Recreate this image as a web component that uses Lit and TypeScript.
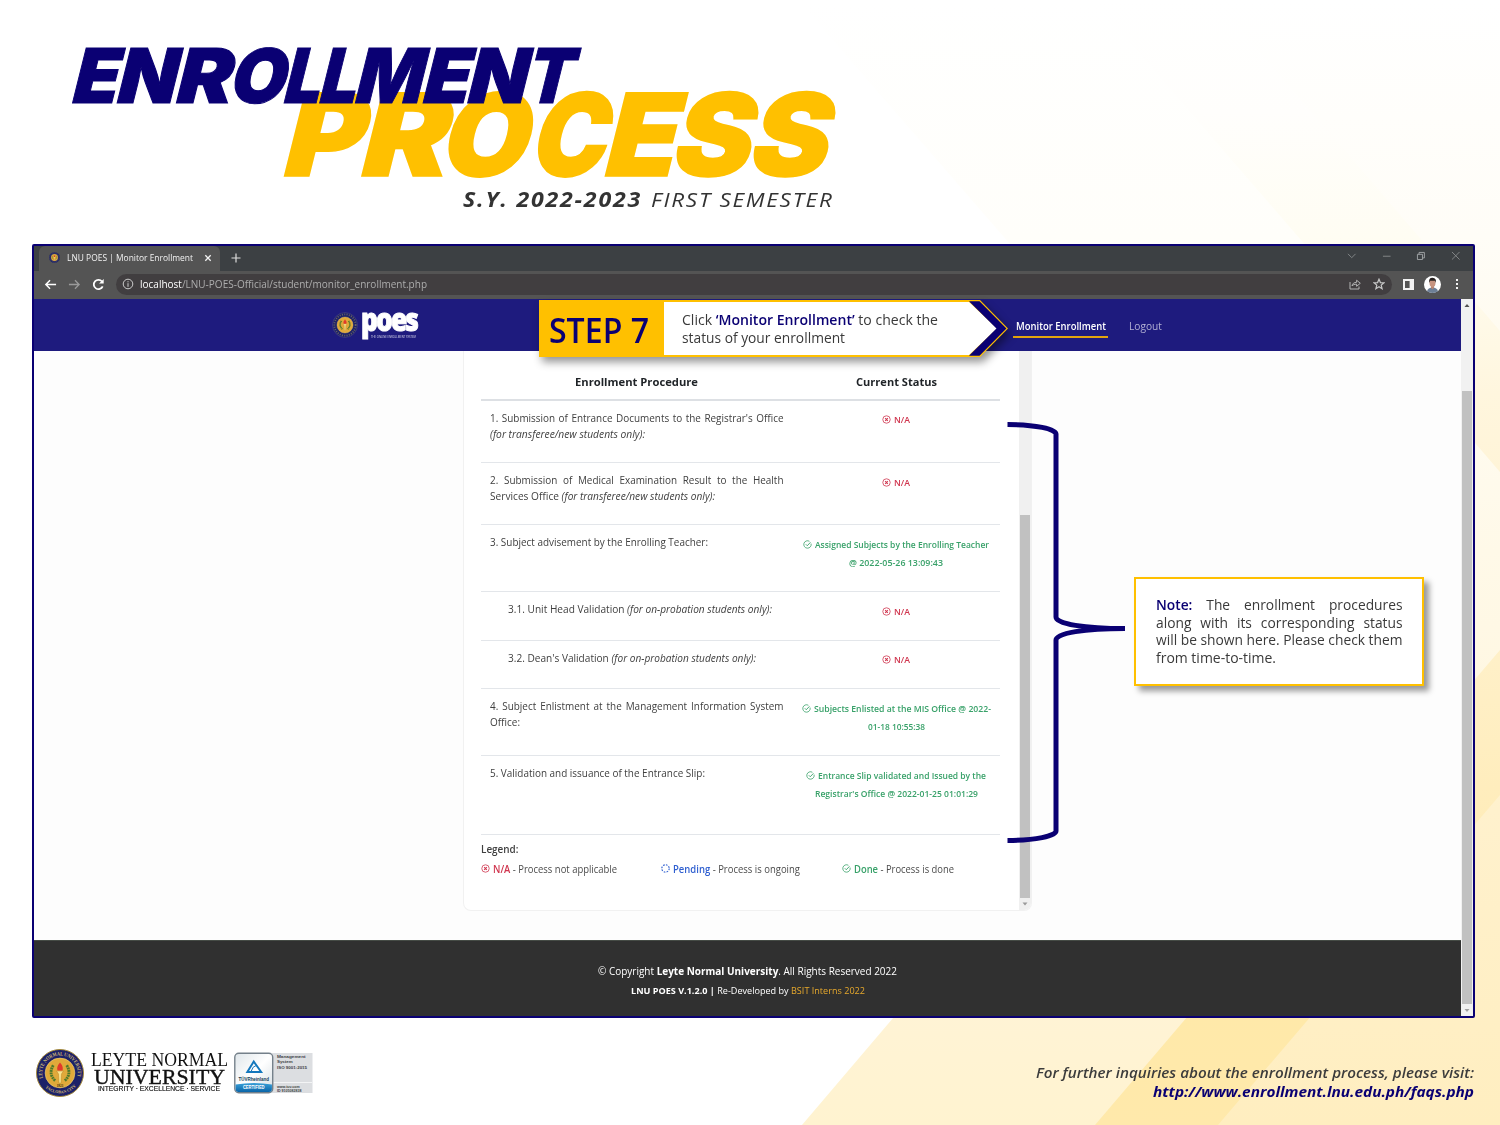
import { LitElement, html, svg, css } from "lit";
import { customElement, property } from "lit/decorators.js";

/** One line of text condensed or expanded to a given width. */
@customElement("fit-text")
class FitText extends LitElement {
  @property({ type: Number }) w = 0;
  /** Stretch the gaps between words instead of the glyphs. */
  @property({ type: Boolean }) justify = false;

  static styles = css`
    :host { display: inline-block; white-space: nowrap; vertical-align: top; text-align: left; }
    .in { display: inline-block; transform-origin: 0 50%; }
  `;

  firstUpdated() {
    const inner = this.renderRoot.querySelector(".in") as HTMLElement;
    const natural = inner.getBoundingClientRect().width;
    this.style.width = this.w + "px";
    if (!natural) return;
    const gaps = ((this.textContent || "").trim().match(/\s+/g) || []).length;
    if (this.justify && gaps) {
      const squeeze = 0.945;
      inner.style.wordSpacing = (this.w / squeeze - natural) / gaps + "px";
      inner.style.transform = `scaleX(${squeeze})`;
    } else {
      inner.style.transform = `scaleX(${this.w / natural})`;
    }
  }

  render() {
    return html`<span class="in"><slot></slot></span>`;
  }
}

const iconNa = html`<svg class="ic" viewBox="0 0 16 16" fill="none" stroke="currentColor" stroke-width="1.4"><circle cx="8" cy="8" r="6.6"/><path d="M5.6 5.6l4.8 4.8M10.4 5.6l-4.8 4.8" stroke-width="1.9"/></svg>`;
const iconOk = html`<svg class="ic" viewBox="0 0 16 16" fill="none" stroke="currentColor" stroke-width="1.4"><path d="M14.4 6.4A6.6 6.6 0 1 1 11.4 2.3"/><path d="M5 7.6l2.6 2.6 5.6-6" stroke-width="1.6"/></svg>`;
const iconPending = html`<svg class="ic" viewBox="0 0 16 16" fill="none" stroke="currentColor" stroke-width="2"><circle cx="8" cy="8" r="6.6" stroke-dasharray="3 2.18"/></svg>`;

const sealCore = svg`
  <circle cx="50" cy="50" r="31" fill="#e0a93a" stroke="#efd27a" stroke-width="1.2"/>
  <path d="M36 34Q25 52 40 66M64 34Q75 52 60 66" fill="none" stroke="#4f7a2b" stroke-width="6" stroke-dasharray="4 1.2"/>
  <path d="M43 46H57L53 52 52 71H48L47 52Z" fill="#f9e48f" stroke="#a9731b" stroke-width=".8"/>
  <path d="M45 45Q42 37 50 28Q58 37 55 45Z" fill="#e2382b"/>`;

const seal = html`
  <svg class="seal" viewBox="0 0 100 100">
    <defs>
      <path id="arcTop" d="M14.5 61A37 37 0 1 1 85.5 61"/>
      <path id="arcBottom" d="M10 66A43.5 43.5 0 0 0 90 66"/>
    </defs>
    <circle cx="50" cy="50" r="49" fill="#1c2168" stroke="#a68b3c" stroke-width="2"/>
    <text font-family="Liberation Serif" font-weight="700" font-size="11" fill="#d3ba74"><textPath href="#arcTop" textLength="134" lengthAdjust="spacingAndGlyphs">LEYTE NORMAL UNIVERSITY</textPath></text>
    <text font-family="Liberation Serif" font-weight="700" font-size="8.5" fill="#d3ba74"><textPath href="#arcBottom" startOffset="17">TACLOBAN CITY</textPath></text>
    ${sealCore}
    <text x="50" y="78.5" font-family="Liberation Serif" font-weight="700" font-size="7" text-anchor="middle" fill="#3c2d10">1921</text>
  </svg>`;

const sealSmall = (edge: string) => html`
  <svg class="seal" viewBox="0 0 100 100">
    <circle cx="50" cy="50" r="48" fill="#1c2168" stroke=${edge} stroke-width="2"/>
    <circle cx="50" cy="50" r="41" fill="none" stroke="#a89664" stroke-width="7" stroke-dasharray="4 5" opacity=".55"/>
    ${sealCore}
  </svg>`;

interface Row {
  cls: string;
  lines: unknown[];
  status: unknown;
}

const na = html`<div class="st na">${iconNa}<fit-text w="16">N/A</fit-text></div>`;

const rows: Row[] = [
  {
    cls: "r62",
    lines: [
      html`<fit-text w="293.5" justify>1. Submission of Entrance Documents to the Registrar's Office</fit-text>`,
      html`<fit-text w="155"><i>(for transferee/new students only):</i></fit-text>`,
    ],
    status: na,
  },
  {
    cls: "r62",
    lines: [
      html`<fit-text w="293.5" justify>2. Submission of Medical Examination Result to the Health</fit-text>`,
      html`<fit-text w="225">Services Office <i>(for transferee/new students only):</i></fit-text>`,
    ],
    status: na,
  },
  {
    cls: "r66",
    lines: [html`<fit-text w="218">3. Subject advisement by the Enrolling Teacher:</fit-text>`],
    status: html`<div class="st ok">${iconOk}<fit-text w="174">Assigned Subjects by the Enrolling Teacher</fit-text></div>
      <div class="st ok"><fit-text w="94">@ 2022-05-26 13:09:43</fit-text></div>`,
  },
  {
    cls: "r49 sub",
    lines: [html`<fit-text w="264">3.1. Unit Head Validation <i>(for on-probation students only):</i></fit-text>`],
    status: na,
  },
  {
    cls: "r49 sub",
    lines: [html`<fit-text w="248">3.2. Dean's Validation <i>(for on-probation students only):</i></fit-text>`],
    status: na,
  },
  {
    cls: "r66",
    lines: [
      html`<fit-text w="293.5" justify>4. Subject Enlistment at the Management Information System</fit-text>`,
      html`<fit-text w="30">Office:</fit-text>`,
    ],
    status: html`<div class="st ok">${iconOk}<fit-text w="177">Subjects Enlisted at the MIS Office @ 2022-</fit-text></div>
      <div class="st ok"><fit-text w="57">01-18 10:55:38</fit-text></div>`,
  },
  {
    cls: "r79",
    lines: [html`<fit-text w="215">5. Validation and issuance of the Entrance Slip:</fit-text>`],
    status: html`<div class="st ok">${iconOk}<fit-text w="168">Entrance Slip validated and Issued by the</fit-text></div>
      <div class="st ok"><fit-text w="163">Registrar's Office @ 2022-01-25 01:01:29</fit-text></div>`,
  },
];

/** Letter, left edge, advance. */
type Glyph = [string, number, number];
const processGlyphs: Glyph[] = [
  ["P", 279, 80], ["R", 356, 87], ["O", 437, 87], ["C", 527, 75], ["E", 600, 72], ["S", 668, 79], ["S", 745, 79],
];
const enrollGlyphs: Glyph[] = [
  ["E", 69, 46], ["N", 113.5, 60], ["R", 172.5, 56], ["O", 227, 56], ["L", 281, 37], ["L", 316.5, 37.5], ["M", 352, 68], ["E", 419.5, 47], ["N", 464, 60], ["T", 523, 46.5],
];
const spans = (list: Glyph[]) =>
  list.map(([ch, x, len]) => svg`<tspan x=${x} textLength=${len} lengthAdjust="spacingAndGlyphs">${ch}</tspan>`);

@customElement("app-root")
class AppRoot extends LitElement {
  static styles = css`
    :host { display: block; }
    * { box-sizing: border-box; }
    .page { position: relative; width: 1500px; height: 1125px; overflow: hidden; background: #fff; display: flex; flex-direction: column; font-family: "Open Sans", "Noto Sans", sans-serif; color: #3a3a3a; }
    .bg { position: absolute; left: 0; top: 0; width: 1500px; height: 1125px; }
    .hero { position: relative; height: 243.5px; display: flex; flex-direction: column; }
    .title { display: block; height: 187px; width: 900px; overflow: visible; }
    .sy { display: flex; gap: 9px; padding-left: 463px; font-size: 20.8px; line-height: 24px; letter-spacing: 1.6px; font-style: italic; color: #333; }
    .sy b { font-weight: 700; }

    .window { position: relative; margin-left: 32px; width: 1443px; height: 774.5px; border: 2px solid #0a0073; border-radius: 2px; display: flex; flex-direction: column; background: #fdfdfd; }
    .tabs { height: 25.4px; background: #3c4043; display: flex; align-items: stretch; justify-content: space-between; padding-left: 5px; }
    .tabs-l { display: flex; align-items: center; }
    .tab { align-self: flex-end; height: 25px; width: 181px; background: #545454; border-radius: 6px 6px 0 0; display: flex; align-items: center; padding-left: 10px; padding-bottom: 1px; font-size: 9.8px; color: #f2f2f2; }
    .fav { width: 11px; height: 11px; display: flex; margin-right: 7px; }
    .seal { display: block; width: 100%; height: 100%; }
    .tab .x { width: 8px; height: 8px; margin-left: 11px; }
    .plus { width: 10px; height: 10px; margin-left: 11px; }
    .wc { display: flex; align-items: center; gap: 25px; padding: 0 13px 5px 0; }
    .wc svg { width: 9.5px; height: 9.5px; display: block; }
    .bar { height: 28px; background: #545454; display: flex; align-items: center; padding: 0 11px 1px 9.5px; }
    .bar svg { display: block; }
    .bar .nv { width: 13px; height: 13px; margin-right: 11px; }
    .url { flex: 1; height: 21px; border-radius: 11px; background: #413e40; display: flex; align-items: center; padding: 0 7px 0 6.5px; font-size: 10.6px; color: #adadad; }
    .url .info { width: 12px; height: 12px; margin-right: 6px; }
    .url .sp { flex: 1; }
    .url .ur { width: 12px; height: 12px; margin-left: 12px; }
    .hl { color: #fff; }
    .side { width: 11px; height: 11px; margin-left: 11px; }
    .ava { width: 17px; height: 17px; margin-left: 10px; }
    .dots { width: 4px; height: 12px; margin-left: 14px; margin-right: 3px; }

    .view { flex: 1; display: flex; min-height: 0; }
    .doc { width: 1427px; display: flex; flex-direction: column; }
    .nav { height: 52px; background: #1e1b7e; display: flex; align-items: center; justify-content: space-between; padding-left: 298px; padding-right: 299.5px; }
    .brand { display: flex; align-items: center; gap: 3px; }
    .brand .bs { width: 26px; height: 26px; }
    .poes { display: flex; flex-direction: column; color: #fff; height: 32px; }
    .poes .big { font-size: 32.5px; line-height: 26px; font-weight: 800; letter-spacing: -2.4px; height: 23px; margin-top: -3px; -webkit-text-stroke: 1px #fff; }
    .poes .tiny { font-size: 3.6px; line-height: 4px; margin: 6px 0 0 10px; color: #d9d9ec; }
    .links { display: flex; gap: 23px; font-size: 10.8px; font-weight: 600; color: #b3b1d4; line-height: 20px; padding-top: 4px; }
    .links .on { color: #fff; border-bottom: 2px solid #e3a40e; padding: 0 2.5px; margin-right: -2.5px; height: 21.5px; }
    .links .off { font-weight: 500; }

    .main { height: 589px; background: #fdfdfd; padding-left: 428.7px; }
    .card { width: 569.5px; height: 559.8px; background: #fff; border: 1.5px solid #f1f1f1; border-top: 0; border-radius: 0 0 8px 8px; display: flex; justify-content: space-between; overflow: hidden; }
    .body { width: 537px; padding: 0 0 0 17.5px; color: #404040; font-size: 10.5px; }
    .head { width: 519px; height: 49.8px; border-bottom: 2px solid #dde0e4; display: flex; align-items: center; font-weight: 700; font-size: 11.2px; color: #1f2327; padding-top: 13px; }
    .c1 { width: 311px; }
    .c2 { width: 208px; }
    .head .c1, .head .c2 { text-align: center; }
    .row { width: 519px; display: flex; border-bottom: 1px solid #e3e6ea; }
    .row .c1 { padding: 9.2px 0 0 9px; line-height: 16px; }
    .row .c2 { padding-top: 10.8px; }
    .row.sub .c1 { padding-left: 27px; }
    .r62 { height: 62.2px; }
    .r66 { height: 66.8px; }
    .r49 { height: 48.7px; }
    .r79 { height: 79px; }
    .c1 > div { height: 16px; }
    .st { height: 18px; line-height: 18px; font-size: 9.6px; font-weight: 600; display: flex; justify-content: center; }
    .ic { width: 9px; height: 9px; margin-right: 3px; margin-top: 4px; flex: none; }
    .na { color: #d0364f; }
    .ok { color: #38a169; }
    .pe { color: #2f5fd0; }
    .legend { padding-top: 5px; line-height: 18px; }
    .lt { font-weight: 600; font-size: 10.6px; height: 19.5px; }
    .li { display: flex; font-size: 10.4px; }
    .li > div { display: flex; flex: none; width: 180.3px; height: 18px; }
    .li svg { margin-top: 4px; }
    .li b { font-weight: 600; }
    .li fit-text { color: #4b4b4b; }
    .isb { width: 12px; background: #f0f0f0; display: flex; flex-direction: column; align-items: center; justify-content: flex-end; }
    .isb .th { width: 9.5px; height: 383px; background: #c1c1c1; }
    .isb svg, .osb svg { width: 6px; height: 12px; display: block; }
    .foot { flex: 1; background: #303030; border-top: 1px solid #454b45; color: #fff; display: flex; flex-direction: column; align-items: center; padding-top: 21px; font-size: 10.6px; line-height: 19px; }
    .foot .s { font-size: 9.4px; }
    .foot .g { color: #e6a82c; }
    .osb { flex: 1; background: #f1f1f1; display: flex; flex-direction: column; align-items: center; }
    .osb .gap { height: 80px; }
    .osb .th { width: 9.5px; flex: 1; background: #c1c1c1; }

    .step { position: absolute; left: 539px; top: 300px; width: 470px; height: 57px; display: flex; filter: drop-shadow(3px 5px 4px rgba(0,0,0,.42)); }
    .step svg { position: absolute; left: 0; top: 0; width: 470px; height: 57px; }
    .step .n { position: relative; width: 125px; padding-left: 10px; font-size: 34px; line-height: 60px; font-weight: 600; color: #0a0073; }
    .step .t { position: relative; padding: 10px 0 0 17.5px; font-size: 15px; line-height: 18px; display: flex; flex-direction: column; color: #3a3a3a; }
    .t b, .note b { color: #0a0073; font-weight: 600; }
    .brace { position: absolute; left: 1000px; top: 415px; width: 130px; height: 435px; }
    .note { position: absolute; left: 1134px; top: 577px; width: 290px; height: 109px; background: #fff; border: 2px solid #ffc000; padding: 17px 20px; font-size: 14.6px; line-height: 17.7px; display: flex; flex-direction: column; box-shadow: 5px 5px 6px rgba(0,0,0,.4); }

    .bottom { position: relative; flex: 1; display: flex; justify-content: space-between; padding: 31px 26px 0 36px; }
    .logos { display: flex; gap: 6.5px; }
    .logos .sl { width: 48px; height: 48px; }
    .lnu { width: 137px; display: flex; flex-direction: column; font-family: "Liberation Serif", serif; color: #111; }
    .lnu .a { font-size: 17.8px; line-height: 18px; padding-top: 2px; height: 17.5px; }
    .lnu .b { font-size: 22px; line-height: 19px; height: 18px; padding-left: 3px; -webkit-text-stroke: .4px #111; }
    .lnu .c { font-family: "Liberation Sans", sans-serif; font-size: 7.2px; line-height: 8px; padding: .5px 0 0 7px; -webkit-text-stroke: .15px #111; }
    .tuv { width: 79px; height: 42px; margin-top: 3px; }
    .ask { text-align: right; padding-top: 14px; font-size: 14.8px; line-height: 19px; font-weight: 600; font-style: italic; color: #3c3c3c; display: flex; flex-direction: column; align-items: flex-end; }
    .ask .u { font-weight: 700; color: #0a0073; }
  `;

  private background() {
    return html`<svg class="bg" viewBox="0 0 1500 1125">
      <defs>
        <linearGradient id="g1" gradientUnits="userSpaceOnUse" x1="0" y1="0" x2="0" y2="1125"><stop offset="0" stop-color="#fff"/><stop offset=".21" stop-color="#fffefa"/><stop offset=".49" stop-color="#fff9e8"/><stop offset=".9" stop-color="#fff3d5"/><stop offset="1" stop-color="#fff3d0"/></linearGradient>
        <linearGradient id="g2" gradientUnits="userSpaceOnUse" x1="0" y1="0" x2="0" y2="1125"><stop offset="0" stop-color="#fff"/><stop offset=".1" stop-color="#fffefc"/><stop offset=".21" stop-color="#fffdf3"/><stop offset=".35" stop-color="#fff6de"/><stop offset=".7" stop-color="#ffedbd"/><stop offset=".9" stop-color="#ffe9a9"/><stop offset="1" stop-color="#ffe9ab"/></linearGradient>
        <linearGradient id="g3" gradientUnits="userSpaceOnUse" x1="0" y1="0" x2="0" y2="1125"><stop offset="0" stop-color="#fff"/><stop offset=".21" stop-color="#fffdf7"/><stop offset=".72" stop-color="#fff1cd"/><stop offset="1" stop-color="#ffeec0"/></linearGradient>
      </defs>
      <path d="M798 0H1500V1125H802L1168 695V426Z" fill="url(#g1)"/>
      <path d="M1093 0H1500V472L1301 240Z" fill="url(#g2)"/>
      <path d="M1215 0H1500V331Z" fill="url(#g3)"/>
      <path d="M1095 1125L1500 650V1125Z" fill="url(#g2)"/>
      <path d="M1218 1125L1500 795V1125Z" fill="url(#g3)"/>
    </svg>`;
  }

  private title() {
    return html`<svg class="title" viewBox="0 0 900 187" font-family="Inter" font-weight="900">
      <g transform="translate(0 176.2) skewX(-14)">
        <text font-size="114.5" fill="#ffc000" stroke="#ffc000" stroke-width="1.6" y="0">${spans(processGlyphs)}</text>
      </g>
      <g transform="translate(0 102.6) skewX(-14)">
        <text font-size="75.5" fill="#0a0073" stroke="#0a0073" stroke-width="1" y="0">${spans(enrollGlyphs)}</text>
      </g>
    </svg>`;
  }

  private chrome() {
    return html`
      <div class="tabs">
        <div class="tabs-l">
          <div class="tab">
            <span class="fav">${sealSmall("#2b2f6e")}</span><fit-text w="126">LNU POES | Monitor Enrollment</fit-text>
            <svg class="x" viewBox="0 0 8 8" stroke="#f2f2f2" stroke-width="1.3"><path d="M1.3 1.3l5.4 5.4M6.7 1.3L1.3 6.7"/></svg>
          </div>
          <svg class="plus" viewBox="0 0 10 10" stroke="#ddd" stroke-width="1.2"><path d="M5 .5V9.5M.5 5H9.5"/></svg>
        </div>
        <div class="wc">
          <svg viewBox="0 0 10 10" fill="none" stroke="#85888a" stroke-width="1"><path d="M1 3l4 4 4-4"/></svg>
          <svg viewBox="0 0 10 10" stroke="#85888a"><path d="M1 5.5H9"/></svg>
          <svg viewBox="0 0 10 10" fill="none" stroke="#a0a3a5"><path d="M1.5 3.5H6.8V9H1.5ZM3.2 3.5V1.5H8.8V7.3H6.8"/></svg>
          <svg viewBox="0 0 10 10" stroke="#85888a"><path d="M1 1l8 8M9 1L1 9"/></svg>
        </div>
      </div>
      <div class="bar">
        <svg class="nv" viewBox="0 0 14 14" fill="none" stroke="#fff" stroke-width="1.6"><path d="M13 7H2M6.5 2.5L2 7l4.5 4.5"/></svg>
        <svg class="nv" viewBox="0 0 14 14" fill="none" stroke="#9a9a9a" stroke-width="1.4"><path d="M1 7H12M7.5 2.5L12 7l-4.5 4.5"/></svg>
        <svg class="nv" viewBox="0 0 14 14" fill="none" stroke="#fff" stroke-width="1.9"><path d="M11.5 9A5 5 0 1 1 10.8 3.8"/><path d="M12.6 1V6H7.6Z" fill="#fff" stroke="none"/></svg>
        <div class="url">
          <svg class="info" viewBox="0 0 12 12" fill="none" stroke="#ccc"><circle cx="6" cy="6" r="4.8"/><path d="M6 5.2V8.8M6 3.2V4.3"/></svg>
          <fit-text w="287"><span class="hl">localhost</span>/LNU-POES-Official/student/monitor_enrollment.php</fit-text>
          <span class="sp"></span>
          <svg class="ur" viewBox="0 0 12 12" fill="none" stroke="#b5b5b5"><path d="M1 4V11H10V8.5M3 8C3.4 5.5 5 4.4 7.6 4.3V2.2L11.3 5.3 7.6 8.3V6.2C5.5 6.1 4.1 6.7 3 8Z"/></svg>
          <svg class="ur" viewBox="0 0 12 12" fill="none" stroke="#c8c8c8" stroke-width="1.2"><path d="M6 1.2L7.4 4.6 11 4.8 8.2 7.1 9.1 10.7 6 8.7 2.9 10.7 3.8 7.1 1 4.8 4.6 4.6Z"/></svg>
        </div>
        <svg class="side" viewBox="0 0 11 11"><rect x="0" y="0" width="11" height="11" fill="#f2f2f2"/><rect x="2" y="2" width="4.6" height="7" fill="#545454"/></svg>
        <svg class="ava" viewBox="0 0 17 17"><circle cx="8.5" cy="8.5" r="8.5" fill="#fff"/><path d="M3 15.2Q4 11.6 8.5 11.6T14 15.2Q8.5 18.6 3 15.2Z" fill="#6d7f96"/><path d="M7 9.5H10V12L8.5 13.2 7 12Z" fill="#b98672"/><ellipse cx="8.5" cy="7" rx="3" ry="4" fill="#c79480"/><path d="M5.2 7Q4.4 1.6 8.6 1.8T11.8 7L11 4.8H6.2Z" fill="#26201f"/></svg>
        <svg class="dots" viewBox="0 0 4 12" fill="#f2f2f2"><rect x="1" y="1" width="2" height="2"/><rect x="1" y="5" width="2" height="2"/><rect x="1" y="9" width="2" height="2"/></svg>
      </div>`;
  }

  private table() {
    return html`<div class="card">
      <div class="body">
        <div class="head">
          <div class="c1"><fit-text w="123">Enrollment Procedure</fit-text></div>
          <div class="c2"><fit-text w="81">Current Status</fit-text></div>
        </div>
        ${rows.map((r) => html`<div class="row ${r.cls}">
          <div class="c1">${r.lines.map((l) => html`<div>${l}</div>`)}</div>
          <div class="c2">${r.status}</div>
        </div>`)}
        <div class="legend">
          <div class="lt"><fit-text w="37.5">Legend:</fit-text></div>
          <div class="li">
            <div class="na">${iconNa}<fit-text w="124"><b class="na">N/A</b> - Process not applicable</fit-text></div>
            <div class="pe">${iconPending}<fit-text w="127"><b class="pe">Pending</b> - Process is ongoing</fit-text></div>
            <div class="ok">${iconOk}<fit-text w="100"><b class="ok">Done</b> - Process is done</fit-text></div>
          </div>
        </div>
      </div>
      <div class="isb"><div class="th"></div><svg viewBox="0 0 6 12"><path d="M.5 4.5H5.5L3 7.5Z" fill="#9a9a9a"/></svg></div>
    </div>`;
  }

  private tuv() {
    return html`<svg class="tuv" viewBox="0 0 80 42" preserveAspectRatio="none" font-family="Liberation Sans">
      <defs>
        <linearGradient id="t1" x1="0" y1="0" x2="1" y2="1"><stop offset="0" stop-color="#dfe6ea"/><stop offset=".5" stop-color="#fff"/><stop offset="1" stop-color="#d5dde2"/></linearGradient>
        <linearGradient id="t2" x1="0" y1="0" x2="0" y2="1"><stop offset="0" stop-color="#3aa0d8"/><stop offset="1" stop-color="#0a65a8"/></linearGradient>
      </defs>
      <rect x="38" y="1" width="41.5" height="40" fill="#dcdee1"/>
      <rect x="40" y="30" width="39" height="1" fill="#f3f4f5"/>
      <rect x=".8" y="1.2" width="38.4" height="39.6" rx="4" fill="url(#t1)" stroke="#74808a" stroke-width="1.4"/>
      <path d="M1.6 32.500Q20 29.500 38.4 32.500V37Q38.4 40 35.4 40H4.6Q1.6 40 1.6 37Z" fill="url(#t2)"/>
      <path d="M20 9.5L13.500 20H27.5Z" fill="none" stroke="#1478bd" stroke-width="2"/>
      <path d="M17.5 19Q19 14 22.5 13.5" fill="none" stroke="#1478bd" stroke-width="1"/>
      <text x="4.5" y="28.6" font-size="5.2" font-weight="700" fill="#143a55" textLength="31" lengthAdjust="spacingAndGlyphs">TÜVRheinland</text>
      <text x="9" y="37" font-size="4.6" font-weight="700" fill="#fff" textLength="22" lengthAdjust="spacingAndGlyphs">CERTIFIED</text>
      <g fill="#3e4246" font-weight="700" font-size="4.2">
        <text x="43.5" y="6" textLength="29" lengthAdjust="spacingAndGlyphs">Management</text>
        <text x="43.5" y="11.3" textLength="16" lengthAdjust="spacingAndGlyphs">System</text>
        <text x="43.5" y="17.5" textLength="30.5" lengthAdjust="spacingAndGlyphs">ISO 9001:2015</text>
        <text x="43.5" y="35.6" font-size="3.3" textLength="23" lengthAdjust="spacingAndGlyphs">www.tuv.com</text>
        <text x="43.5" y="39.6" font-size="3.1" textLength="25" lengthAdjust="spacingAndGlyphs">ID 9105082838</text>
      </g>
    </svg>`;
  }

  render() {
    return html`<div class="page">
      ${this.background()}
      <header class="hero">
        ${this.title()}
        <div class="sy"><fit-text w="179"><b>S.Y. 2022-2023</b></fit-text><fit-text w="182.500">FIRST SEMESTER</fit-text></div>
      </header>

      <section class="window">
        ${this.chrome()}
        <div class="view">
          <div class="doc">
            <nav class="nav">
              <div class="brand">
                <div class="bs">${sealSmall("#56508a")}</div>
                <div class="poes"><div class="big"><fit-text w="56">poes</fit-text></div><div class="tiny"><fit-text w="45">THE ONLINE ENROLLMENT SYSTEM</fit-text></div></div>
              </div>
              <div class="links">
                <span class="on"><fit-text w="90">Monitor Enrollment</fit-text></span>
                <span class="off"><fit-text w="33">Logout</fit-text></span>
              </div>
            </nav>
            <main class="main">${this.table()}</main>
            <footer class="foot">
              <fit-text w="299">© Copyright <b>Leyte Normal University</b>. All Rights Reserved 2022</fit-text>
              <fit-text class="s" w="234"><b>LNU POES V.1.2.0 |</b> Re-Developed by <span class="g">BSIT Interns 2022</span></fit-text>
            </footer>
          </div>
          <div class="osb">
            <svg viewBox="0 0 6 12"><path d="M.5 8H5.5L3 5Z" fill="#505050"/></svg>
            <div class="gap"></div><div class="th"></div>
            <svg viewBox="0 0 6 12"><path d="M.5 5H5.5L3 8Z" fill="#a0a0a0"/></svg>
          </div>
        </div>
      </section>

      <footer class="bottom">
        <div class="logos">
          <div class="sl">${seal}</div>
          <div class="lnu">
            <div class="a"><fit-text w="137">LEYTE NORMAL</fit-text></div>
            <div class="b"><fit-text w="131">UNIVERSITY</fit-text></div>
            <div class="c"><fit-text w="122">INTEGRITY · EXCELLENCE · SERVICE</fit-text></div>
          </div>
          ${this.tuv()}
        </div>
        <div class="ask">
          <fit-text w="438">For further inquiries about the enrollment process, please visit:</fit-text>
          <fit-text class="u" w="321">http://www.enrollment.lnu.edu.ph/faqs.php</fit-text>
        </div>
      </footer>

      <div class="step">
        <svg viewBox="0 0 470 57">
          <path d="M0 0H441L469 28.5 441 57H0Z" fill="#ffc000"/>
          <path d="M125 2H430L458 28.5 430 55H125Z" fill="#fff"/>
          <path d="M430 1.2H440.5L467.4 28.5 440.5 55.8H430L457.5 28.5Z" fill="#0a0073"/>
        </svg>
        <div class="n"><fit-text w="100">STEP 7</fit-text></div>
        <div class="t">
          <fit-text w="256">Click <b>‘Monitor Enrollment’</b> to check the</fit-text>
          <fit-text w="163">status of your enrollment</fit-text>
        </div>
      </div>

      <svg class="brace" viewBox="1000 415 130 435" fill="none" stroke="#0a0073" stroke-width="5"><path d="M1007.5 424.5C1035 424.5 1056 429 1056 434V617C1056 624 1085 628.5 1125 628.5C1085 628.5 1056 633 1056 640V831C1056 836 1035 840.5 1007.5 840.5"/></svg>

      <aside class="note">
        <fit-text w="246.5" justify><b>Note:</b> The enrollment procedures</fit-text>
        <fit-text w="246.5" justify>along with its corresponding status</fit-text>
        <fit-text w="246.5">will be shown here. Please check them</fit-text>
        <fit-text w="120">from time-to-time.</fit-text>
      </aside>
    </div>`;
  }
}
